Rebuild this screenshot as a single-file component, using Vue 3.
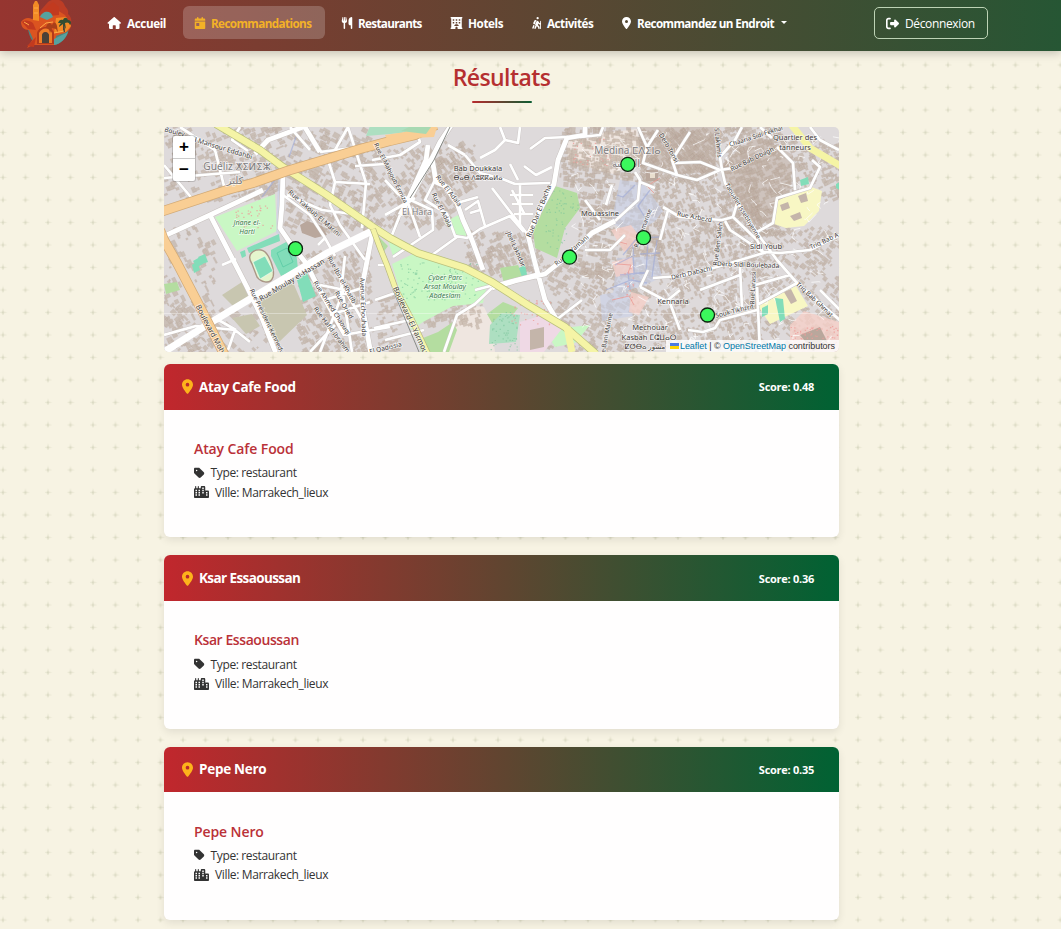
<script setup>
const icons = {
  home: { w: 576, d: 'M575.8 255.5c0 18-15 32.1-32 32.1h-32l.7 160.2V472c0 22.1-17.9 40-40 40H352V376c0-13-11-24-24-24h-80c-13 0-24 11-24 24v136H104c-22 0-40-18-40-40V287.6H32c-18 0-32-14-32-32.1 0-9 3-17 10-24L266.4 8c7-7 15-8 22-8s15 2 21 7L564.8 231.5c8 7 12 15 11 24z' },
  calendar: { w: 448, d: 'M128 0c17.7 0 32 14.3 32 32V64H288V32c0-17.7 14.3-32 32-32s32 14.3 32 32V64h48c26.5 0 48 21.5 48 48v48H0V112C0 85.5 21.5 64 48 64H96V32c0-17.7 14.3-32 32-32zM0 192H448V464c0 26.5-21.5 48-48 48H48c-26.5 0-48-21.5-48-48V192zm80 64c-8.8 0-16 7.2-16 16v96c0 8.8 7.2 16 16 16h96c8.800 0 16-7.200 16-16V272c0-8.800-7.200-16-16-16H80z' },
  utensils: { w: 448, d: 'M416 0C400 0 288 32 288 176V288c0 35.3 28.7 64 64 64h32V480c0 17.7 14.3 32 32 32s32-14.3 32-32V352 240 32c0-17.7-14.3-32-32-32zM64 16C64 7.8 57.9 1 49.7 .1S34.2 4.6 32.4 12.5L2.1 148.8C.7 155.1 0 161.5 0 167.9c0 45.9 35.1 83.6 80 87.7V480c0 17.7 14.3 32 32 32s32-14.3 32-32V255.6c44.9-4.1 80-41.8 80-87.7c0-6.4-.7-12.8-2.1-19.1L191.6 12.5c-1.8-8-9.3-13.3-17.4-12.4S160 7.8 160 16V150.2c0 5.4-4.4 9.8-9.8 9.8c-5.1 0-9.3-3.9-9.8-9L127.9 14.6C127.2 6.3 120.3 0 112 0s-15.2 6.3-15.9 14.6L83.7 151c-.5 5.1-4.7 9-9.8 9c-5.4 0-9.8-4.4-9.8-9.8V16z' },
  hotel: { w: 512, d: 'M32 0H480c42 0 42 64 0 64V448c42 0 42 64 0 64H304V464c0-64-96-64-96 0v48H32c-42 0-42-64 0-64V64C-10 64-10 0 32 0zM96 96v64h64V96zM224 96v64h64V96zM352 96v64h64V96zM96 208v64h64v-64zM224 208v64h64v-64zM352 208v64h64v-64zM160 384H352c0-106-192-106-192 0z' },
  hike: { w: 384, d: 'M192 48a48 48 0 1 1 96 0 48 48 0 1 1-96 0zM105 149L51 257c-6 12-1 26 11 32l48 24c10 5 22 1 27-9l54-108c12-24-5-58-32-64-24-5-44 4-54 17zM156 339l-56 128c-14 38 45 63 61 24l46-104 52 56 10 45c9 40 71 26 62-14l-13-58c-2-7-5-13-10-18l-56-59 20-67 22 35c5 7 12 12 20 12h34v169c0 31 36 31 36 0V188c0-31-36-31-36 0v67h-28l-42-62c-14-20-35-33-57-33-31 0-57 20-66 50l-24 81c-5 18 0 36 13 49zM66 320l-54 134c-16 41 43 64 59 23l44-110-36-20z' },
  pin: { w: 384, d: 'M215.7 499.2C267 435 384 279.4 384 192C384 86 298 0 192 0S0 86 0 192c0 87.4 117 243 168.3 307.2c12.3 15.3 35.1 15.3 47.4 0zM192 128a64 64 0 1 1 0 128 64 64 0 1 1 0-128z' },
  exit: { w: 512, d: 'M377.9 105.9L500.7 228.7c7.2 7.2 11.3 17.1 11.3 27.3s-4.1 20.1-11.3 27.3L377.9 406.1c-6.4 6.4-15 9.9-24 9.9c-18.7 0-33.9-15.2-33.9-33.9l0-62.1-128 0c-17.7 0-32-14.3-32-32l0-64c0-17.7 14.3-32 32-32l128 0 0-62.1c0-18.7 15.2-33.9 33.9-33.9c9 0 17.6 3.6 24 9.9zM160 96L96 96c-17.7 0-32 14.3-32 32l0 256c0 17.7 14.3 32 32 32l64 0c17.7 0 32 14.3 32 32s-14.3 32-32 32l-64 0c-53 0-96-43-96-96L0 128C0 75 43 32 96 32l64 0c17.7 0 32 14.3 32 32s-14.3 32-32 32z' },
  tag: { w: 448, d: 'M0 80V229.5c0 17 6.7 33.3 18.7 45.3l176 176c25 25 65.5 25 90.5 0L418.7 317.3c25-25 25-65.5 0-90.5l-176-176c-12-12-28.3-18.7-45.3-18.7H48C21.5 32 0 53.5 0 80zm112 32a32 32 0 1 1 0 64 32 32 0 1 1 0-64z' },
  city: { w: 640, d: 'M72 0c13 0 24 11 24 24V96h64V24c0-31 48-31 48 0V96h80V48c0-26 22-48 48-48h96c26 0 48 22 48 48V192h112c26 0 48 22 48 48V464c0 26-22 48-48 48H48c-26 0-48-22-48-48V144c0-26 22-48 48-48V24C48 11 59 0 72 0zM64 160v64h64v-64zM192 160v64h64v-64zM352 64v64h64V64zM352 160v64h64v-64zM64 256v64h64v-64zM192 256v64h64v-64zM352 256v64h64v-64zM512 256v64h64v-64zM64 352v64h64v-64zM192 352v64h64v-64zM512 352v64h64v-64z' },
}
const nav = [
  { t: 'Accueil', i: 'home', c: 'n1' },
  { t: 'Recommandations', i: 'calendar', c: 'n2 active' },
  { t: 'Restaurants', i: 'utensils', c: 'n3' },
  { t: 'Hotels', i: 'hotel', c: 'n4' },
  { t: 'Activités', i: 'hike', c: 'n5' },
  { t: 'Recommandez un Endroit', i: 'pin', c: 'n6', caret: true },
]
const places = [
  { name: 'Atay Cafe Food', score: '0.48', c: '' },
  { name: 'Ksar Essaoussan', score: '0.36', c: 'tight' },
  { name: 'Pepe Nero', score: '0.35', c: '' },
]

// deterministic building footprints for each district
let seed = 7
const rnd = () => ((seed = (seed * 16807) % 2147483647) / 2147483647)
function district(x0, y0, x1, y1, n, ang, max) {
  let d = ''
  const c = Math.cos(ang), s = Math.sin(ang)
  for (let k = 0; k < n; k++) {
    const x = x0 + rnd() * (x1 - x0), y = y0 + rnd() * (y1 - y0)
    const w = 1.5 + rnd() * max, h = 1.2 + rnd() * max * 0.7
    d += `M${x.toFixed(1)} ${y.toFixed(1)}l${(w * c).toFixed(1)} ${(w * s).toFixed(1)} ${(-h * s).toFixed(1)} ${(h * c).toFixed(1)} ${(-w * c).toFixed(1)} ${(-w * s).toFixed(1)}z`
  }
  return d
}
const buildings = [
  district(164, 127, 280, 200, 260, -0.4, 6),
  district(164, 225, 215, 352, 120, 1.1, 6),
  district(285, 127, 370, 230, 300, 0.5, 6),
  district(300, 250, 372, 352, 380, 1.05, 5),
  district(370, 145, 455, 225, 300, 0.9, 5),
  district(376, 295, 400, 352, 50, -0.3, 5),
  district(430, 140, 475, 195, 110, 1, 5),
  district(465, 230, 545, 275, 230, 1.1, 4.5),
  district(560, 127, 640, 185, 380, 0.1, 5),
  district(578, 190, 660, 275, 420, 0.2, 5),
  district(640, 127, 720, 180, 560, 0.9, 4.5),
  district(720, 127, 780, 235, 560, -0.4, 4.5),
  district(780, 140, 839, 200, 200, -0.4, 4.5),
  district(655, 180, 760, 345, 900, 1.2, 4),
  district(755, 225, 839, 352, 420, 0.7, 4.5),
  district(545, 260, 650, 352, 380, 0.5, 5),
  district(422, 300, 480, 325, 70, -0.3, 6),
  district(164, 300, 270, 352, 90, 0.8, 6),
].join('')
const lanes = (() => {
  let d = ''
  for (let k = 0; k < 190; k++) {
    const x = 570 + rnd() * 265, y = 130 + rnd() * 215
    d += `M${x.toFixed(1)} ${y.toFixed(1)}l${(rnd() * 16 - 8).toFixed(1)} ${(rnd() * 12 - 4).toFixed(1)} ${(rnd() * 10 - 3).toFixed(1)} ${(rnd() * 12 - 4).toFixed(1)}`
  }
  return d
})()
const scatter = (zones) => {
  let d = ''
  for (const [a, b, c, e, n] of zones) for (let k = 0; k < n; k++) d += `M${(a + rnd() * (c - a)).toFixed(1)} ${(b + rnd() * (e - b)).toFixed(1)}h1.3v1.2h-1.3z`
  return d
}
const dots = scatter([[235, 205, 272, 228, 35], [790, 325, 838, 350, 75], [510, 298, 550, 325, 50], [570, 135, 610, 165, 35], [624, 262, 636, 300, 14]])
const trees = scatter([[395, 262, 478, 300, 130], [570, 195, 578, 210, 8], [490, 312, 517, 350, 60], [545, 190, 566, 250, 50]])

const arterial = 'M160 212L227 190L253 183L287 171L327 159L360 149L390 141L415 135L436 125'
const boulevard = 'M160 230L164 240L177 263L200 307L225 356'
const yellow = 'M216 124L260 150L283 167L327 195L373 227L390 238L418 253L465 268L492 282L528 305L565 327L596 354'
const yarmouk = 'M373 229L380 248L387 265L396 290L412 320L428 354'
const big = 'M160 238L210 215L263 190M164 352L210 323L260 293L327 253L372 231M210 215L247 287L262 318L277 356M283 172L282 205L280 228L293 247L306 263L317 285L345 335M255 154L268 140L303 127M303 124L320 152M373 230L362 287L363 310L371 354M585 125V135L567 138L558 160L554 184L541 208L528 235L535 263L545 300L558 322M492 288L515 281L545 274L570 254L592 233L615 221M452 124L440 142L432 158L436 182L445 186L457 203L463 220L472 240L483 270M408 202L432 158M428 145L426 160L408 200L400 215'
const mid = 'M164 178L240 172M164 165L195 202M180 127L215 150L225 190M240 127L232 140L248 151M164 335L196 326L235 330L250 342M235 330L228 350M236 330L215 318L248 300M222 265L236 259M287 195L322 210L360 215L371 230M328 160L335 182L330 205L340 225L365 260M335 182L370 184M335 150L348 127M348 127L366 183L362 228M320 152L360 147M355 166L385 164M290 127L310 150M283 195L310 215L325 238L335 256M325 238L318 245M325 300L365 287M330 315L370 302M343 335L390 327M340 275L352 352M345 256L340 300L320 352M378 265L390 265M375 300L398 292M374 328L410 320M385 340L424 330M320 285L345 290L365 325M310 352L335 325M415 127L420 142L400 155L372 160M385 180L398 194L432 210L433 230L393 257M400 215L390 240M408 203L420 237M385 215L415 198M435 180L425 200L447 214L455 236L467 238L480 229L510 216L524 232M432 255L457 237M457 203L478 197M465 155L480 173L500 178L515 184L550 183M465 155L448 145M480 158L495 150L505 140L518 143L520 127M500 127L505 140M530 149L545 138L568 137M492 188L528 235M510 164L518 180M524 166L536 175L552 167M512 190L525 215M520 185V225M510 195H533M512 204H533M514 214H533M465 210L478 201L485 226M470 213L480 210M475 290L540 273M444 352L457 315L475 304L492 288M585 200L600 220M585 250L610 250L625 235M556 320L582 300M615 221L638 200L640 180L635 172M580 137L600 135L603 127M638 127L647 147L643 163L677 175L697 180L720 170L733 168M647 147L658 130M677 175L672 160L690 132M675 163L700 162L720 170M742 127L735 140L720 157L722 170L725 183L757 233L777 260L797 283L842 322M757 232L773 223L777 198L810 188L820 167L812 160M777 147L793 163L795 190M663 207L680 217L722 220L733 217L757 240L763 252L780 253L810 250L840 235M725 221L730 230L763 252M668 210L660 240M653 278L680 276L717 267L767 252M740 267L742 307M757 287L760 352M757 305L797 283M640 287L670 303L680 330M703 332L715 328L720 320L757 310M703 332L688 330M648 270L640 287M640 182L655 188M606 205L612 185M820 290L840 310M755 285L790 275M733 217L738 200M700 290L740 275M770 352L776 340M680 290L668 300M810 127L820 140L839 150M772 138L760 127'

const labels = [
  ['Guéliz ⵅⵉⵍⵉⵣ', 237, 169.5, 10.2, 0, 'town'],
  ['ڭليز', 235, 184, 10, 0, 'town'],
  ['Medina ⵎⴷⵉⵏⴰ', 627.5, 154, 10, 0, 'town'],
  ['المدينة', 626, 167, 10, 0, 'town'],
  ['El Hara', 417, 215, 9, 0, 'town'],
  ['Bab Doukkala', 478, 170.5, 7.5, 0, ''],
  ['ⴱⴰⴱ ⴷⵓⴽⴽⴰⵍⴰ', 478, 180, 6.6, 0, ''],
  ['Mouassine', 600, 216, 7.5, 0, ''],
  ['Quartier des', 795, 140, 7.5, 0, ''],
  ['tanneurs', 795, 149.5, 7.5, 0, ''],
  ['Sidi Youb', 766, 249, 7.5, 0, ''],
  ['Kennaria', 673, 304, 7.5, 0, ''],
  ['Mechouar', 650, 330, 7.5, 0, ''],
  ['Kasbah ⵎⵛⵡⴰⵔ', 649, 340, 7.5, 0, ''],
  ['ⵇⵚⴱⴰ مشور', 645, 349, 7, 0, ''],
  ['Jnane el-', 247, 225, 7, 0, 'park'],
  ['Harti', 247, 233.5, 7, 0, 'park'],
  ['Cyber Parc', 445, 279.5, 7.2, 0, 'park'],
  ['Arsat Moulay', 445, 288.5, 7.2, 0, 'park'],
  ['Abdeslam', 445, 297.5, 7.2, 0, 'park'],
  ['Boulevard Moh', 208, 330, 7.5, 62, ''],
  ['Boulevard El Yarmouk', 409, 323, 7.5, 65, ''],
  ['Rue Moulay el-Hassan', 293, 282, 7.2, -31, ''],
  ['Rue Président Kennedy', 265, 322, 6.5, 64, ''],
  ['El Mansour Eddahbi', 221, 150, 6.8, 17, ''],
  ['Boulev', 174, 134, 6.5, 15, ''],
  ['Rue Yakoub El Marini', 313, 215, 6.8, 41, ''],
  ['Rue Ibn el-Khatib', 340, 281, 6.5, 61, ''],
  ['Rue Ahmed Chaouqi', 330, 309, 6.5, 57, ''],
  ['Rue Oried', 342, 306, 6.5, 60, ''],
  ['Rue Hafid Ibrahim', 330, 331, 6.5, 53, ''],
  ['Avenue Echouhada', 361, 307, 6.5, 88, ''],
  ['El Qadissia', 386, 350, 6.5, -14, ''],
  ['Rue El Mahjoub Ermiza', 389, 174, 6.2, 63, ''],
  ['Rue El Adala', 447, 192, 6.5, 52, ''],
  ['Rue El Adala', 440, 211, 6.5, 63, ''],
  ['Rue Dar El Bacha', 541, 212, 7, -68, ''],
  ['Jbel Lakhdar', 514, 250, 6.5, 66, ''],
  ['Rue El Yamani', 573, 252, 6.5, -41, ''],
  ['Rue Semarine', 645, 229, 6.2, -70, ''],
  ['Derb Tonsi', 667, 149, 6.5, 60, ''],
  ['S Lakhmis', 716, 143, 6.3, 84, ''],
  ['Chaaria Sidi Fekhar', 757, 138, 6.3, -18, ''],
  ['Rue Bab Dbagh', 753, 161, 6.5, -26, ''],
  ['Rue Azbezd', 694, 219, 6.5, 11, ''],
  ['Taoualet Issebtiyenne', 741, 212, 6.2, 59, ''],
  ['Rue Ben Saleh', 720, 244, 6.5, -83, ''],
  ['Derb Dabachi', 692, 275, 6.5, -13, ''],
  ['Derb Sidi Boulebada', 748, 267, 6.5, 2, ''],
  ['Triq Bab A', 825, 243, 6.5, -25, ''],
  ['Triq Bab Ghmat', 813, 301, 6.5, 43, ''],
  ['Rue Larassi', 755, 288, 6.2, -87, ''],
  ['Souk Tikhzrit', 735, 313, 6.5, -14, ''],
  ['Rue Bani Marine', 608, 337, 6.2, -79, ''],
]
const markers = [[295.5, 248.7], [569.5, 257.2], [627.8, 164.3], [643.5, 237.7], [707.5, 315]]
</script>

<template>
  <div class="page">
    <header class="navbar">
      <svg class="logo" viewBox="0 0 52 48">
        <path fill="#bd3d25" d="M28 2c5-4 14-3 16 2s5 5 4 10c5 4 4 12-1 15l-19 4-14-10 7-13z" />
        <path fill="#4f827d" d="M8 29l12-4 29 3c-1 9-7 15-14 17H17c-5-3-8-9-9-16z" />
        <path fill="#db5420" d="M1 22c3-4 7-5 11-3l8-3 8-5 9-1 8 5 6 10c0 5-5 8-10 9l-5 2-1 9H13l-6 3 6-9-4-9c-5 0-8-3-8-8z" />
        <path fill="#f28a25" d="M13 20V5l2-4h2l2 4v16zM36 18l10-1 5 9-5 6-12 1z" />
        <path fill="#c23a1f" d="M2 22c4-3 8-1 11 1l3 7-8-1zM24 10l9-8 6 5v8l-10 1zM7 46l9-9-2 10z" />
        <path fill="#56a29f" d="M20 17c2-6 11-8 13 0l-6 3zM34 39l14-7c-2 6-7 12-14 13z" />
        <path fill="#b23a1b" d="M17 44V33c2-8 15-8 17 0v11z" />
        <path fill="#f07f28" d="M19 43V33c3-6 10-6 13 0v10h-3v-8c-2-4-6-4-7 0v8z" />
        <path fill="#4c4238" d="M22 43v-8c1-4 6-4 7 0v8zM43 23h1.500l.5 9h-2z" />
        <path fill="#344d31" d="M38 23c1-3 3-4 5-3 1-3 4-3 5 0 3 0 4 3 2 5-1-3-3-3-5-2l1 6-3-5-4 3c0-2 1-3 2-4z" />
        <path fill="#a9401a" d="M26 27c2-5 4-5 6-2 2-4 4-3 5 1l1 7-2-4-4-1-2 5-1-4z" />
        <path stroke="#ffab48" fill="none" d="M14 8h4M14 13h4M4 22l5 3M20 28l6-5 7-1M34 33l10-2" />
      </svg>
      <nav class="links">
        <a v-for="n in nav" :key="n.t" :class="['link', n.c]">
          <svg class="ico" :viewBox="`0 0 ${icons[n.i].w} 512`"><path fill-rule="evenodd" :d="icons[n.i].d" /></svg>
          <span>{{ n.t }}</span>
          <i v-if="n.caret" class="caret"></i>
        </a>
      </nav>
      <button class="logout">
        <svg class="ico" viewBox="0 0 512 512"><path :d="icons.exit.d" /></svg>
        <span>Déconnexion</span>
      </button>
    </header>

    <main class="content">
      <h1 class="title">Résultats</h1>
      <div class="rule"></div>

      <section class="map">
        <svg class="tiles" viewBox="164 127 675 225">
          <rect x="164" y="127" width="675" height="225" fill="#dedadb" />
          <path fill="#efe6e0" d="M455 322l12-17 17 2 7 14 4 31h-50zM567 137l70-8 6 30-30 15-45-12z" />
          <path fill="#bdaba0" opacity=".5" d="M640 127h80l-6 45-38 2-35-15zM722 165l35-30 36 20-4 50-30 22-33-35z" />
          <path class="bld" :d="buildings" />
          <path fill="#c9f7c4" d="M215 217l60-23 2 37-40 20zM392 264l25-12 71 29-5 22-30 3-30 16-12 8zM445 222l15-8 9 12-3 10-12-2zM385 232l14 8 14 7-20 9zM545 330l45-5-15 18-20 4z" />
          <path fill="#b4dda0" d="M552 185l25 8 3 15-15 20-8 30-22-10-2-20 10-20zM418 340l20-8 15-10 4 8-8 22h-28zM500 268l18-3 7 15-20 7zM164 284l13-2 3 8-14 4zM487 314l16-12 15 6-9 12-14 8zM376 234l12 12-6 8z" />
          <path fill="#addfc1" d="M366 136l4-10h42l-10 7zM490 325l12-12 18 2-4 27-27 2zM396 127h36l-6 10-16-2z" />
          <path fill="#c8c6b0" d="M260 300l32-20 15 35-29 28-14-20zM222 295l20-13 7 16-12 12zM232 318l20-4 8 12-14 8z" />
          <path fill="#f8f7c4" d="M777 201l32-15 13 5-3 20-15 15-18 2-12-4zM758 306l38-20 12 20-38 18z" />
          <path fill="#efd9e5" d="M520 322l26-8 18 12-20 26h-24z" />
          <path fill="#c4b5aa" d="M530 330l14-3v20l-14 3zM780 205l8-3 2 6-8 3zM798 196l8-3 2 8-7 2zM790 216l10-4 2 6-8 3zM784 292l7-3 6 12-6 3z" />
          <path fill="#c8d0e8" opacity=".6" d="M620 180l23 3 20 28-8 10-20 14-24-12zM617 258l40-2 5 21-19 9-30 8zM600 295l28-5 5 26-31 5zM278 180l5 1-3 54-4-2z" />
          <path fill="#f5d0c8" opacity=".8" d="M612 262l20-5 2 16-18 4zM631 292l18 5-10 18-10-3zM611 230l20-5 11 15-18 12zM790 325l14-14 35 11v30h-49z" />
          <path fill="#b9a79c" d="M300 225l7-4 15 5 5 9-12 3-13-5zM800 335l20-8 8 16-15 8zM646 170h12v11h-12z" />
          <path fill="#e9dfcf" d="M650 173h5v5h-5z" />
          <path stroke="#fff" stroke-opacity=".7" stroke-width="1" fill="none" :d="lanes" />
          <path stroke="#9ca9d7" stroke-opacity=".6" stroke-width="1.3" fill="none" d="M650 190l-12 16 8 13-8 18-15 18M635 185l-12 12-6-2M640 238l19-1M648 240l-2 34M657 240l-5 37M640 254l20-1M633 245l1 30M620 275l28-3M635 255l-20 10M628 272l2 18M282 170l-20 27M296 137l-7 20M606 290l25-10 16 3" />
          <path stroke="#eb9b94" stroke-width=".8" fill="none" d="M617 264l14 1-3 8M612 300l17-4 5 9M660 178l-13 8 7 7M616 241l11 3" />
          <path fill="#82ddb9" d="M247 248l32-14 1 7-31 12zM297 280l10-7 9 23-13 6zM193 261l7-4 3 7-6 3zM198 257l7-3 3 8-6 2zM192 265l5-4 3 9-6 3zM240 252l5-2 1 6-4 2zM519 268l6-3 3 14-5 1zM800 180l8-3 1 7-8 2zM762 308l6-3v9l-6 3zM775 298l8 1 2 20-5 3zM836 184l4-2v8l-4-2z" />
          <path fill="#e5f5cd" stroke="#aa9787" stroke-width="1.4" d="M252 264c-6-9 1-15 9-14 8 1 14 20 12 27-3 9-13 4-16 0z" />
          <path fill="#82ddb9" stroke="#fff" stroke-width=".5" d="M253 262l12-6 8 15-13 8z" />
          <path fill="#82ddb9" d="M271 250l17-9 8 10 2 18-17 7-10-20z" />
          <path fill="none" stroke="#53c7a0" stroke-width=".7" d="M277 253l10-5 6 14-10 5z" />
          <path fill="#ee9c98" :d="dots" opacity=".8" />
          <path fill="#79c69b" :d="trees" opacity=".6" />
          <path stroke="#c7c1be" stroke-width="5.8" fill="none" :d="big" />
          <path stroke="#cbc6c4" stroke-width="3.5" fill="none" :d="mid" />
          <path stroke="#fff" stroke-width="2.7" fill="none" stroke-linejoin="round" :d="mid" />
          <path stroke="#fff" stroke-width="4.8" fill="none" stroke-linejoin="round" :d="big" />
          <path stroke="#fff" stroke-width="7" fill="none" d="M164 352L210 323L260 293L327 253L372 231" />
          <path stroke="#888b87" stroke-width="1" fill="none" d="M450 127L434 160L410 198M391 270l2 20 26 62" />
          <path stroke="#bac07d" stroke-width="8" fill="none" :d="yellow" />
          <path stroke="#f5f4a6" stroke-width="6.5" fill="none" :d="yellow" />
          <path stroke="#b7b780" stroke-width="6" fill="none" :d="yarmouk" />
          <path stroke="#f4f3a5" stroke-width="4.7" fill="none" :d="yarmouk" />
          <path stroke="#f5f4a5" stroke-width="7" fill="none" d="M790 123l20 25 34 20M567 327l5 25" />
          <path stroke="#d2aa76" stroke-width="10" fill="none" :d="arterial + boulevard" />
          <path stroke="#f9ce94" stroke-width="8.5" fill="none" :d="arterial + boulevard" />
          <path fill="#f9ce94" d="M385 135l20-3 5-5h27l-3 10-20 1-26 3z" />
          <path fill="#a8d9b2" d="M401 131l8-4h22l-5 7z" />
          <path stroke="#fff" stroke-opacity=".6" stroke-width=".6" d="M164 313.500h675" />
          <text
            v-for="(l, k) in labels" :key="k" :class="['lbl', l[5]]" :font-size="l[3]"
            :transform="`translate(${l[1]} ${l[2]}) rotate(${l[4]})`" text-anchor="middle"
          >{{ l[0] }}</text>
          <circle v-for="(m, k) in markers" :key="'m' + k" :cx="m[0]" :cy="m[1]" r="7" fill="#3bf75c" stroke="#0c2510" stroke-width="1.3" />
        </svg>
        <div class="zoom"><span>+</span><span>−</span></div>
        <div class="attribution">
          <svg class="flag" viewBox="0 0 12 8"><path fill="#4C7BE1" d="M0 0h12v4H0z" /><path fill="#FFD500" d="M0 4h12v4H0z" /></svg>
          <a>Leaflet</a> | © <a>OpenStreetMap</a> contributors
        </div>
      </section>

      <article v-for="p in places" :key="p.name" :class="['card', p.c]">
        <div class="card-head">
          <svg class="head-pin" viewBox="0 0 384 512"><path :d="icons.pin.d" /></svg>
          <span class="head-name">{{ p.name }}</span>
          <span class="score">Score: {{ p.score }}</span>
        </div>
        <div class="card-body">
          <h2>{{ p.name }}</h2>
          <p><svg class="tag" viewBox="0 0 448 512"><path :d="icons.tag.d" /></svg><span>Type: restaurant</span></p>
          <p><svg class="city" viewBox="0 0 640 512"><path fill-rule="evenodd" :d="icons.city.d" /></svg><span>Ville: Marrakech_lieux</span></p>
        </div>
      </article>
    </main>
  </div>
</template>

<style>
body { margin: 0; overflow: hidden; }
</style>

<style scoped>
* { box-sizing: border-box; }
.page {
  height: 929px;
  overflow: hidden;
  color: #333;
  font-family: "Open Sans", "Noto Sans", sans-serif;
  background-color: #f7f3e3;
  background-size: 22.5px 22.5px;
  background-image:
    radial-gradient(ellipse 4.5px 1.3px at 3px 20px, rgba(100, 110, 60, .1) 40%, transparent),
    radial-gradient(ellipse 1.3px 4.5px at 3px 20px, rgba(100, 110, 60, .1) 40%, transparent);
}
.navbar {
  position: relative;
  display: flex;
  height: 51px;
  background: linear-gradient(90deg, #963530, #265634);
  box-shadow: 0 2px 9px rgba(0, 0, 0, .22);
  color: #fff;
}
.logo { width: 52px; height: 48px; margin-left: 20px; flex: none; }
.links { display: flex; gap: 4px; margin: 6px 0 0 23px; height: 33px; }
.link { display: flex; align-items: center; padding: 1px 0 0 12px; border-radius: 6px; font-size: 11.700px; font-weight: 700; white-space: nowrap; }
.link .ico { height: 12px; margin-right: 5px; flex: none; }
.ico, .head-pin, .tag, .city { fill: currentColor; }
.n1 { width: 84px; letter-spacing: -.4px; }
.n1 .ico { width: 14.500px; margin-right: 5.500px; }
.n2 { width: 142px; letter-spacing: -.6px; padding-left: 11px; }
.n2 .ico { width: 12px; }
.n3 { width: 105px; letter-spacing: -.68px; }
.n3 .ico { width: 12px; }
.n4 { width: 78px; letter-spacing: -.4px; }
.n4 .ico { width: 13px; }
.n5 { width: 86px; letter-spacing: -.5px; padding-left: 11px; }
.n5 .ico { width: 11px; }
.n6 { width: 200px; letter-spacing: -.58px; }
.n6 .ico { width: 9px; margin-right: 6px; }
.active { color: #f3b127; background: rgba(255, 255, 255, .2); }
.caret { border: 3px solid transparent; border-top-color: #fff; border-bottom: 0; margin: -2px 0 0 7px; }
.logout { display: flex; align-items: center; width: 114px; height: 32px; margin: 7px 0 0 64px; padding: 1px 0 0 11px; border: 1px solid #bdd3b5; border-radius: 5px; background: none; color: #fff; font: 12px "Open Sans", sans-serif; letter-spacing: -.36px; }
.logout .ico { width: 13px; height: 13px; margin-right: 6px; }
.content { width: 675px; margin-left: 164px; }
.title { margin: 0; padding-top: 9px; height: 50px; line-height: 34px; font-size: 23px; font-weight: 600; letter-spacing: -.6px; text-align: center; color: #b52f30; }
.rule { width: 60px; height: 2px; margin: 0 auto 26px; border-radius: 2px; background: linear-gradient(90deg, #b82b2e, #0c5d33); }
.rule { margin-bottom: 24px; }
.map { position: relative; height: 225px; margin-bottom: 12px; border-radius: 5px; overflow: hidden; }
.tiles { display: block; width: 675px; height: 225px; }
.bld { fill: #bfaea2; fill-opacity: .62; stroke: #b3a195; stroke-opacity: .5; stroke-width: .3; }
.lbl { font-family: "Noto Sans", "DejaVu Sans", sans-serif; fill: #3f3b39; paint-order: stroke; stroke: rgba(255, 255, 255, .65); stroke-width: 1.5px; }
.town { fill: #807d80; }
.park { fill: #3f7c50; font-style: italic; }
.zoom { position: absolute; left: 9px; top: 9px; width: 22px; height: 45px; border-radius: 2px; background: #fff; box-shadow: 0 0 0 1px rgba(0, 0, 0, .16); }
.zoom span { display: block; height: 22px; text-align: center; font: 700 17px/22px "Liberation Sans", sans-serif; color: #000; }
.zoom span + span { border-top: 1px solid #ccc; }
.attribution { position: absolute; right: 0; bottom: 0; height: 12px; padding: 0 4px; background: rgba(255, 255, 255, .8); font: 9px/12px "Liberation Sans", sans-serif; letter-spacing: -.04px; white-space: nowrap; }
.attribution a { color: #0078a8; }
.flag { width: 9px; height: 6px; margin-right: 1px; vertical-align: 0; }
.card { height: 173.300px; margin-bottom: 18px; overflow: hidden; border-radius: 6px; background: #fffefe; box-shadow: 0 3px 9px rgba(0, 0, 0, .09); }
.card-head { display: flex; align-items: center; height: 45.500px; padding: 0 25px 0 18px; color: #fff; background: linear-gradient(90deg, #c1272d, #006233); }
.head-pin { width: 11px; height: 15px; margin-right: 6px; color: #fdb31b; }
.head-name { font-size: 13.500px; font-weight: 700; letter-spacing: -.28px; }
.score { margin-left: auto; font-size: 11px; font-weight: 700; letter-spacing: -.26px; }
.card-body { padding: 29.500px 30px; }
.card-body h2 { margin: 0 0 4px; line-height: 20px; font-size: 14px; font-weight: 600; letter-spacing: -.1px; color: #ba3138; }
.tight h2 { letter-spacing: -.42px; }
.tight .head-name { letter-spacing: -.6px; }
.card-body p { display: flex; align-items: center; height: 19.500px; margin: 0; font-size: 12px; letter-spacing: -.36px; }
.tag { width: 10.500px; height: 12px; margin-right: 6px; }
.city { width: 15px; height: 12px; margin-right: 6px; }
</style>
